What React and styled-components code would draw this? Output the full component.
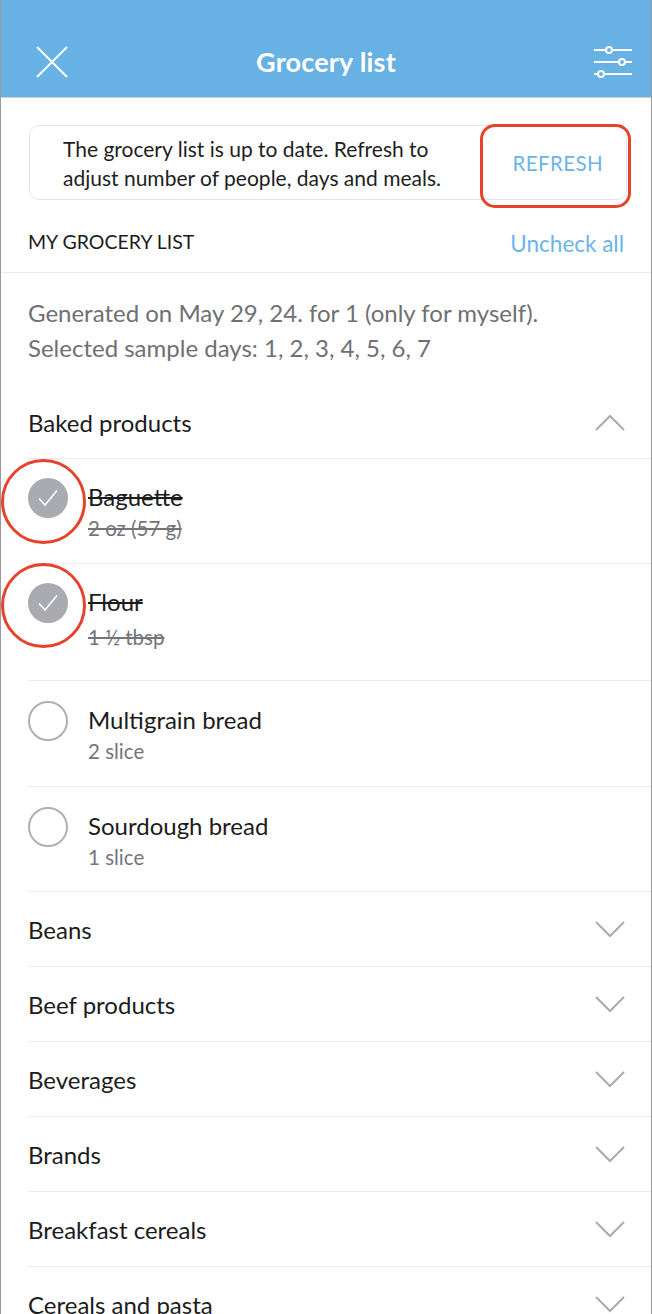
import React from "react";
import styled, { createGlobalStyle } from "styled-components";

const GlobalStyle = createGlobalStyle`
    html, body {
        margin: 0;
        padding: 0;
        background: #ffffff;
    }
    * {
        box-sizing: border-box;
    }
`;

const Page = styled.div`
    width: 652px;
    height: 1314px;
    overflow: hidden;
    border-left: 1px solid #9a9a9a;
    border-right: 1px solid #9a9a9a;
    font-family: "Lato", "Noto Sans", sans-serif;
    color: #1c1c1c;
    background: #ffffff;
`;

const Header = styled.header`
    height: 98px;
    background: #68b1e5;
    border-bottom: 1px solid #c9cfd6;
    display: grid;
    grid-template-columns: 1fr auto 1fr;
    align-items: center;
    padding: 26px 18px 0 18px;
`;

const Title = styled.h1`
    margin: 0;
    font-size: 27px;
    font-weight: 700;
    color: #ffffff;
    letter-spacing: 0.2px;
`;

const IconButton = styled.div`
    display: flex;
    align-items: center;
    justify-content: ${(p) => (p.$right ? "flex-end" : "flex-start")};
    padding-left: ${(p) => (p.$right ? 0 : 17)}px;
`;

const Notice = styled.div`
    position: relative;
    margin: 27px 24px 0 28px;
    height: 75px;
    border: 1px solid #e4e4e4;
    border-radius: 10px;
    display: flex;
    align-items: center;
    justify-content: space-between;
    padding: 0 23px 0 33px;
`;

const NoticeText = styled.p`
    margin: 0;
    font-size: 21px;
    line-height: 29px;
    color: #1e1e1e;
`;

const RefreshButton = styled.span`
    font-size: 20.5px;
    color: #6cb4e8;
    letter-spacing: 0.4px;
`;

const RedBox = styled.div`
    position: absolute;
    right: -5px;
    top: -2px;
    width: 151px;
    height: 84px;
    border: 3.5px solid #e5432b;
    border-radius: 15px;
`;

const SectionBar = styled.div`
    display: flex;
    justify-content: space-between;
    align-items: flex-end;
    padding: 0 27px 15px 27px;
    height: 73px;
    border-bottom: 1px solid #ececec;
`;

const SectionLabel = styled.span`
    font-size: 19.5px;
    text-transform: uppercase;
    color: #1c1c1c;
    margin-bottom: 4px;
`;

const LinkText = styled.span`
    font-size: 22.5px;
    color: #6cb4e8;
`;

const Info = styled.p`
    margin: 0;
    padding: 22px 27px 0;
    font-size: 24px;
    line-height: 35px;
    color: #6f7074;
    height: 114px;
`;

const CategoryRow = styled.div`
    display: flex;
    align-items: center;
    justify-content: space-between;
    margin-left: 27px;
    padding-right: 26px;
    height: ${(p) => p.$height || 75}px;
    border-bottom: 1px solid #ececec;
`;

const CategoryName = styled.span`
    font-size: 24px;
    color: #1c1c1c;
`;

const ItemRow = styled.div`
    position: relative;
    display: flex;
    align-items: flex-start;
    margin-left: 27px;
    height: ${(p) => p.$height}px;
    padding-top: ${(p) => p.$top}px;
    border-bottom: 1px solid #ececec;
`;

const Check = styled.div`
    width: 40px;
    height: 40px;
    border-radius: 50%;
    flex-shrink: 0;
    display: flex;
    align-items: center;
    justify-content: center;
    background: ${(p) => (p.$done ? "#a9abb0" : "transparent")};
    border: ${(p) => (p.$done ? "none" : "2.5px solid #aeb0b4")};
`;

const ItemText = styled.div`
    margin-left: 20px;
    display: flex;
    flex-direction: column;
    margin-top: 4px;
`;

const ItemName = styled.span`
    font-size: 24px;
    line-height: 30px;
    color: #1c1c1c;
    text-decoration: ${(p) => (p.$done ? "line-through" : "none")};
    text-decoration-thickness: 1.5px;
`;

const ItemAmount = styled.span`
    font-size: 20.5px;
    line-height: ${(p) => p.$lh || 26}px;
    margin-top: ${(p) => p.$mt || 3}px;
    color: #74757a;
    text-decoration: ${(p) => (p.$done ? "line-through" : "none")};
`;

const RedRing = styled.div`
    position: absolute;
    left: -27px;
    top: ${(p) => p.$top}px;
    width: 85px;
    height: 85px;
    border-radius: 50%;
    border: 3.5px solid #e5432b;
`;

const CloseIcon = () => (
    <svg width="32" height="32" viewBox="0 0 32 32">
        <path d="M1 1 L31 31 M31 1 L1 31" stroke="#ffffff" strokeWidth="2" fill="none" />
    </svg>
);

const SlidersIcon = () => (
    <svg width="40" height="32" viewBox="0 0 40 32">
        <g stroke="#ffffff" strokeWidth="2" fill="none">
            <path d="M1 4 H13 M19 4 H39" />
            <path d="M1 16 H26 M32 16 H39" />
            <path d="M1 28 H5 M11 28 H39" />
            <circle cx="16" cy="4" r="3" />
            <circle cx="29" cy="16" r="3" />
            <circle cx="8" cy="28" r="3" />
        </g>
    </svg>
);

const Chevron = ({ up }) => (
    <svg width="30" height="17" viewBox="0 0 30 17">
        <path
            d={up ? "M1 16 L15 2 L29 16" : "M1 1 L15 15 L29 1"}
            stroke="#a9abae"
            strokeWidth="2"
            fill="none"
        />
    </svg>
);

const Tick = () => (
    <svg width="22" height="20" viewBox="0 0 22 20">
        <path d="M2 10.5 L8 17 L20 2.5" stroke="#ffffff" strokeWidth="1.6" fill="none" />
    </svg>
);

const items = [
    { name: "Baguette", amount: "2 oz (57 g)", done: true, height: 105, top: 19, ring: 0 },
    { name: "Flour", amount: "1 ½ tbsp", done: true, height: 117, top: 19, ring: -1, lh: 30, mt: 5 },
    { name: "Multigrain bread", amount: "2 slice", done: false, height: 106, top: 20 },
    { name: "Sourdough bread", amount: "1 slice", done: false, height: 105, top: 20 },
];

const categories = [
    "Beans",
    "Beef products",
    "Beverages",
    "Brands",
    "Breakfast cereals",
    "Cereals and pasta",
];

export default function App() {
    return (
        <Page>
            <GlobalStyle />
            <Header>
                <IconButton>
                    <CloseIcon />
                </IconButton>
                <Title>Grocery list</Title>
                <IconButton $right>
                    <SlidersIcon />
                </IconButton>
            </Header>
            <Notice>
                <NoticeText>
                    The grocery list is up to date. Refresh to
                    <br />
                    adjust number of people, days and meals.
                </NoticeText>
                <RefreshButton>REFRESH</RefreshButton>
                <RedBox />
            </Notice>
            <SectionBar>
                <SectionLabel>My grocery list</SectionLabel>
                <LinkText>Uncheck all</LinkText>
            </SectionBar>
            <Info>
                Generated on May 29, 24. for 1 (only for myself).
                <br />
                Selected sample days: 1, 2, 3, 4, 5, 6, 7
            </Info>
            <CategoryRow $height={72}>
                <CategoryName>Baked products</CategoryName>
                <Chevron up />
            </CategoryRow>
            {items.map((it) => (
                <ItemRow key={it.name} $height={it.height} $top={it.top}>
                    <Check $done={it.done}>{it.done && <Tick />}</Check>
                    <ItemText>
                        <ItemName $done={it.done}>{it.name}</ItemName>
                        <ItemAmount $done={it.done} $lh={it.lh} $mt={it.mt}>
                            {it.amount}
                        </ItemAmount>
                    </ItemText>
                    {it.ring !== undefined && <RedRing $top={it.ring} />}
                </ItemRow>
            ))}
            {categories.map((c) => (
                <CategoryRow key={c}>
                    <CategoryName>{c}</CategoryName>
                    <Chevron />
                </CategoryRow>
            ))}
        </Page>
    );
}
